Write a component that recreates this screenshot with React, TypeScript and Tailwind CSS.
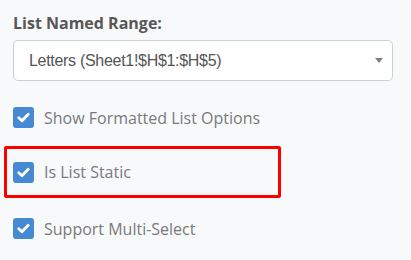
import React from "react";

function Check() {
  return (
    <div className="w-[21px] h-[21px] rounded-[3px] bg-[#468ad3] flex items-center justify-center shrink-0">
      <svg width="13" height="11" viewBox="0 0 13 11">
        <path d="M1.8 5.8 L5 8.8 L11.2 2.2" stroke="white" strokeWidth="2.8" fill="none" strokeLinecap="round" strokeLinejoin="round" />
      </svg>
    </div>
  );
}

function Row({ label }: { label: string }) {
  return (
    <div className="flex items-center h-[21px]">
      <Check />
      <span className="ml-[10px] text-[16px] text-[#7a7a7a] leading-none" style={{ fontFamily: '"Open Sans", sans-serif' }}>
        {label}
      </span>
    </div>
  );
}

export default function App() {
  return (
    <div className="w-[411px] h-[260px] bg-[#f8f9fb] px-[13px] pt-[12px] overflow-hidden">
      <div className="text-[16px] font-bold text-[#575757] leading-[22px]" style={{ fontFamily: '"Open Sans", sans-serif' }}>
        List Named Range:
      </div>
      <div className="mt-[6px] w-[380px] h-[41px] bg-white border border-[#cfcfcf] rounded-[5px] flex items-center justify-between pl-[15px] pr-[9px]">
        <span className="text-[16px] tracking-[-0.3px] text-[#555]" style={{ fontFamily: '"Liberation Sans", Arial, sans-serif' }}>
          Letters (Sheet1!$H$1:$H$5)
        </span>
        <svg width="8" height="5" viewBox="0 0 8 5">
          <path d="M0 0 L8 0 L4 5 Z" fill="#808080" />
        </svg>
      </div>
      <div className="mt-[26px]">
        <Row label="Show Formatted List Options" />
      </div>
      <div className="mt-[18px] -ml-[9px] w-[277px] h-[52px] border-[3px] border-[#ff0000] rounded-[2px] flex items-center pl-[6px]">
        <Row label="Is List Static" />
      </div>
      <div className="mt-[20px]">
        <Row label="Support Multi-Select" />
      </div>
    </div>
  );
}
